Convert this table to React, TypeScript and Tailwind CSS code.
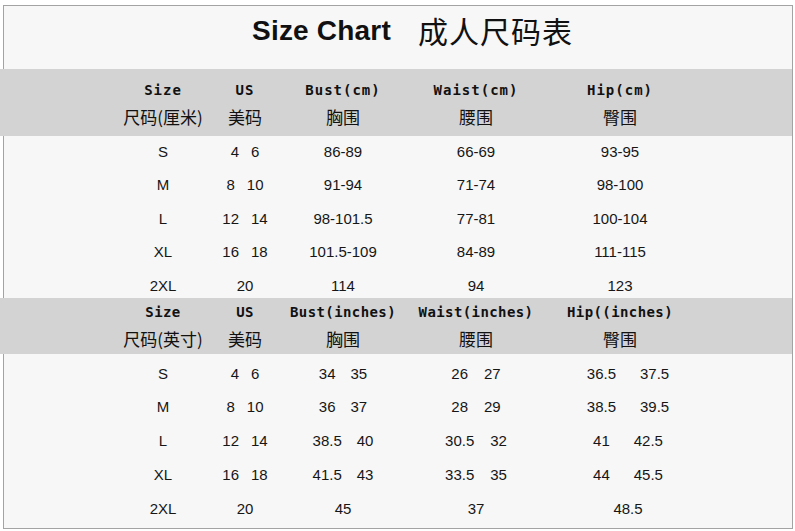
type Cell = string | [string, string];

const sans = "font-['Liberation_Sans',Arial,sans-serif]";
const mono = "font-['DejaVu_Sans_Mono','Liberation_Mono',monospace]";
const cjk = "font-['Noto_Sans_CJK_SC','Noto_Sans',sans-serif]";

// column widths so the centres land at 163 / 245 / 343 / 476 / 620
const cols = ["w-[100px]", "w-[64px]", "w-[132px]", "w-[134px]", "w-[154px]"];
const gaps = ["gap-0", "gap-[12px]", "gap-[15px]", "gap-[16px]", "gap-[24px]"];

const cmRows: Cell[][] = [
  ["S", ["4", "6"], "86-89", "66-69", "93-95"],
  ["M", ["8", "10"], "91-94", "71-74", "98-100"],
  ["L", ["12", "14"], "98-101.5", "77-81", "100-104"],
  ["XL", ["16", "18"], "101.5-109", "84-89", "111-115"],
  ["2XL", "20", "114", "94", "123"],
];

const inchRows: Cell[][] = [
  ["S", ["4", "6"], ["34", "35"], ["26", "27"], ["36.5", "37.5"]],
  ["M", ["8", "10"], ["36", "37"], ["28", "29"], ["38.5", "39.5"]],
  ["L", ["12", "14"], ["38.5", "40"], ["30.5", "32"], ["41", "42.5"]],
  ["XL", ["16", "18"], ["41.5", "43"], ["33.5", "35"], ["44", "45.5"]],
  ["2XL", "20", "45", "37", "48.5"],
];

const HeaderBand = ({
  en,
  zh,
  height,
  top,
  tracking,
}: {
  en: string[];
  zh: string[];
  height: string;
  top: string;
  tracking: string;
}) => (
  <div className={`-ml-[4px] pl-[113px] bg-[#d3d3d3] ${height} ${top}`}>
    <div className={`flex h-[20px] items-center ${mono} text-[14px] font-bold ${tracking} text-[#111]`}>
      {en.map((t, i) => (
        <div key={i} className={`${cols[i]} flex justify-center whitespace-nowrap`}>
          {t}
        </div>
      ))}
    </div>
    <div className={`mt-[7px] flex h-[20px] items-center ${cjk} text-[17px] text-[#111]`}>
      {zh.map((t, i) => (
        <div key={i} className={`${cols[i]} flex justify-center whitespace-nowrap`}>
          {t}
        </div>
      ))}
    </div>
  </div>
);

const DataRows = ({
  rows,
  rowH,
  hipShift,
}: {
  rows: Cell[][];
  rowH: string;
  hipShift?: boolean;
}) => (
  <div className={`pl-[109px] ${sans} text-[15px] text-[#161616]`}>
    {rows.map((row, r) => (
      <div key={r} className={`flex items-center ${rowH}`}>
        {row.map((c, i) => (
          <div
            key={i}
            className={`${cols[i]} flex justify-center whitespace-nowrap ${gaps[i]} ${
              hipShift && i === 4 ? "pl-[16px]" : ""
            }`}
          >
            {Array.isArray(c) ? (
              <>
                <span>{c[0]}</span>
                <span>{c[1]}</span>
              </>
            ) : (
              <span>{c}</span>
            )}
          </div>
        ))}
      </div>
    ))}
  </div>
);

export default function App() {
  return (
    <div className="w-[795px] h-[531px] bg-white pt-[5px] pl-[3px]">
      <div className="w-[790px] border border-[#a3a3a3] bg-[#f7f7f7]">
        <div className="h-[63px] flex items-center justify-center pl-[29px] pb-[14px] gap-[27px] text-[#111]">
          <span className={`${sans} text-[28px] font-bold tracking-[0.2px]`}>Size Chart</span>
          <span className={`${cjk} text-[30px] tracking-[1px]`}>成人尺码表</span>
        </div>

        <HeaderBand
          en={["Size", "US", "Bust(cm)", "Waist(cm)", "Hip(cm)"]}
          zh={["尺码(厘米)", "美码", "胸围", "腰围", "臀围"]}
          height="h-[67px]"
          top="pt-[11px]"
          tracking="tracking-[1px]"
        />

        <div className="h-[163px]">
          <div className="-mt-[1px]">
            <DataRows rows={cmRows} rowH="h-[33.6px]" />
          </div>
        </div>

        <HeaderBand
          en={["Size", "US", "Bust(inches)", "Waist(inches)", "Hip((inches)"]}
          zh={["尺码(英寸)", "美码", "胸围", "腰围", "臀围"]}
          height="h-[56px]"
          top="pt-[4px]"
          tracking="tracking-[0.4px]"
        />

        <div className="h-[174px] pt-[3px]">
          <DataRows rows={inchRows} rowH="h-[33.75px]" hipShift />
        </div>
      </div>
    </div>
  );
}
